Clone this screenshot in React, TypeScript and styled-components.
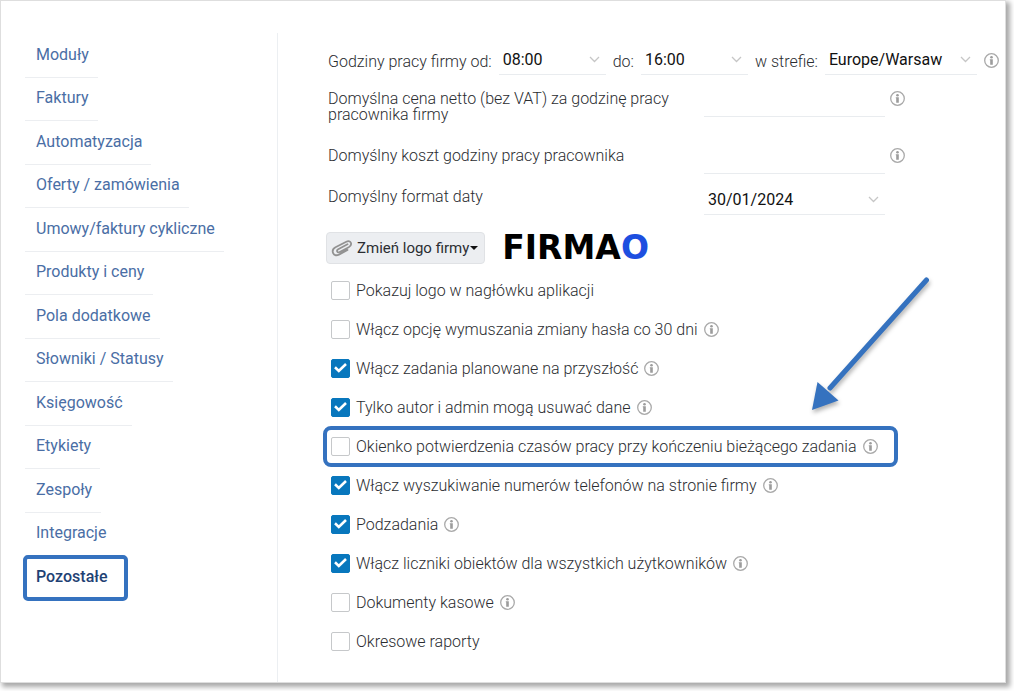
import React, { useId } from "react";
import styled, { createGlobalStyle, css } from "styled-components";

const accent = "#3572bf";

const GlobalStyle = createGlobalStyle`
  * { box-sizing: border-box; }
  body {
    margin: 0;
    background: #fff;
    color: #2b2d31;
    font-family: Roboto, "Liberation Sans", sans-serif;
    font-size: 16px;
    line-height: 16px;
  }
  input, select, button { font: inherit; color: inherit; }
`;

const Page = styled.div`
  display: flex;
  min-height: 100vh;
  padding: 0 8px 8px 0;
`;

const Card = styled.div`
  display: flex;
  flex: 1;
  padding-top: 32px;
  border: 1px solid #dedede;
  background: #fff;
  box-shadow: 3px 3px 5px 1px #a8a8a8;
`;

const Sidebar = styled.nav`
  flex: 0 0 277px;
  border-right: 1px solid #eceff2;
`;

const NavList = styled.ul`
  display: flex;
  flex-direction: column;
  align-items: flex-start;
  margin: 0;
  padding: 1px 0 0 24px;
  list-style: none;
`;

const NavItem = styled.li<{ $active?: boolean }>`
  position: relative;
  padding: 11px 9px 12px 11px;
  border-bottom: 1px solid #eceef1;
  line-height: 20px;

  &:nth-child(even) { padding-top: 10px; }

  ${(p) =>
    p.$active &&
    css`
      border-color: transparent;
      &::after {
        content: "";
        position: absolute;
        inset: -1px -12px -2px -2px;
        border: 4px solid ${accent};
        border-radius: 5px;
      }
    `}
`;

const NavLink = styled.a<{ $active?: boolean }>`
  color: ${(p) => (p.$active ? "#1f4274" : "#4a6ea5")};
  font-weight: ${(p) => (p.$active ? 500 : 400)};
  text-decoration: none;
`;

const Main = styled.main`
  flex: 1;
  min-width: 0;
  padding: 12px 4px 20px 50px;
`;

const HoursRow = styled.div`
  display: flex;
  align-items: center;
  gap: 7px;
  margin-bottom: 12px;
  white-space: nowrap;
`;

const HoursLabel = styled.label`
  padding-top: 3px;
  font-weight: 300;
`;

const SelectBox = styled.span<{ $width: number }>`
  display: grid;
  align-items: center;
  width: ${(p) => p.$width}px;
  height: 30px;
  border-bottom: 1px solid #e9ecef;

  > * { grid-area: 1 / 1; }
  > svg { justify-self: end; margin-right: 6px; pointer-events: none; }
`;

const Select = styled.select`
  appearance: none;
  width: 100%;
  height: 29px;
  padding: 0 4px;
  border: 0;
  background: transparent;
  color: #111;
`;

const Fields = styled.div`
  display: grid;
  row-gap: 11px;
`;

const FieldRow = styled.div`
  display: grid;
  grid-template-columns: 371px 181px 15px;
  column-gap: 5px;
  align-items: start;

  > svg { margin-top: 4px; }
`;

const FieldLabel = styled.label`
  max-width: 364px;
  padding: 4px 0 10px;
  font-weight: 300;
`;

const TextInput = styled.input`
  width: 100%;
  height: 30px;
  padding: 0 4px;
  border: 0;
  border-bottom: 1px solid #e9ecef;
  background: transparent;
`;

const LogoRow = styled.div`
  display: flex;
  align-items: center;
  gap: 17px;
  margin: 17px 0 7px -2px;
`;

const LogoButton = styled.button`
  display: flex;
  align-items: center;
  gap: 4px;
  height: 32px;
  padding: 0 6px 0 4px;
  border: 1px solid #e0e2e5;
  border-radius: 4px;
  background: #eceef1;
  color: #2b2d31;
  font-size: 15px;
`;

const Caret = styled.span`
  margin-left: -3px;
  border: 4px solid transparent;
  border-top: 4px solid #111;
  border-bottom: 0;
`;

const Logo = styled.div`
  color: #000;
  font-family: "DejaVu Sans", sans-serif;
  font-size: 33px;
  font-weight: 700;
  line-height: 28px;
`;

const LogoRing = styled.span`
  color: #1d4fe0;
`;

const Options = styled.ul`
  margin: 0;
  padding: 0;
  list-style: none;
`;

const Option = styled.li<{ $marked?: boolean }>`
  position: relative;
  display: flex;
  align-items: center;
  gap: 6px;
  width: fit-content;
  height: 39px;
  padding-left: 3px;

  ${(p) =>
    p.$marked &&
    css`
      &::after {
        content: "";
        position: absolute;
        inset: -1px -20px -1px -5px;
        border: 4px solid ${accent};
        border-radius: 8px;
        pointer-events: none;
      }
    `}
`;

const OptionLabel = styled.label`
  display: flex;
  align-items: center;
  gap: 6px;
  font-weight: 300;
  white-space: nowrap;
`;

const Tick = styled.span`
  display: grid;
  place-items: center;

  > * { grid-area: 1 / 1; }
  > svg { pointer-events: none; }
`;

const TickInput = styled.input`
  appearance: none;
  width: 19px;
  height: 19px;
  margin: 0;
  border: 1px solid #c6c8ca;
  border-radius: 2px;
  background: #fff;

  &:checked { border-color: #0877bd; background: #0877bd; }
  & + svg { visibility: hidden; }
  &:checked + svg { visibility: visible; }
`;

const Arrow = styled.svg`
  position: absolute;
  right: -54px;
  bottom: 56px;
  filter: drop-shadow(1px 3px 2px rgba(0, 0, 0, 0.3));
  overflow: visible;
  pointer-events: none;
`;

const InfoIcon = () => (
  <svg width="15" height="15" viewBox="0 0 15 15" fill="none" aria-hidden="true">
    <circle cx="7.5" cy="7.5" r="6.8" stroke="#a9a9a9" strokeWidth="1.3" />
    <circle cx="7.5" cy="4.2" r="1.3" fill="#9c9c9c" />
    <path d="M5.8 6.2h3v5.5H6.2V7.2h-.4z" fill="#9c9c9c" />
  </svg>
);

const Chevron = () => (
  <svg width="11" height="7" viewBox="0 0 11 7" fill="none" aria-hidden="true">
    <path d="M1 1l4.5 4.5L10 1" stroke="#c6c6c6" strokeWidth="1.3" />
  </svg>
);

const ClipIcon = () => (
  <svg width="22" height="20" viewBox="0 0 22 20" fill="none" aria-hidden="true">
    <path
      d="M16.5 6.3L7.2 11.2c-2.2 1.3-.9 4 1.5 2.8l9-4.7c4.3-2.4 2.3-7.9-2.4-5.6L4.5 9.300c-5.200 2.900-2.300 10.200 3.400 7.300l8.600-4.700"
      stroke="#929292"
      strokeWidth="1.8"
      strokeLinecap="round"
      strokeLinejoin="round"
    />
  </svg>
);

const Check = () => (
  <svg width="13" height="11" viewBox="0 0 13 11" fill="none" aria-hidden="true">
    <path d="M1 4.3l3.8 3.6L12 1" stroke="#fff" strokeWidth="2.6" />
  </svg>
);

type SelectFieldProps = { id: string; value: string; width: number };

const SelectField = ({ id, value, width }: SelectFieldProps) => (
  <SelectBox $width={width}>
    <Select id={id} defaultValue={value}>
      <option>{value}</option>
    </Select>
    <Chevron />
  </SelectBox>
);

type OptionData = { text: string; checked?: boolean; info?: boolean; marked?: boolean };

const OptionItem = ({ text, checked, info, marked }: OptionData) => {
  const id = useId();
  return (
    <Option $marked={marked}>
      <OptionLabel htmlFor={id}>
        <Tick>
          <TickInput id={id} type="checkbox" defaultChecked={checked} />
          <Check />
        </Tick>
        {text}
      </OptionLabel>
      {info && <InfoIcon />}
      {marked && (
        <Arrow width="120" height="136" viewBox="0 0 120 136" aria-hidden="true">
          <path d="M114.5 6L18 114" stroke={accent} strokeWidth="5" strokeLinecap="round" />
          <path d="M0 136L5.5 108L26.5 126.5Z" fill={accent} />
        </Arrow>
      )}
    </Option>
  );
};

const navItems = [
  "Moduły",
  "Faktury",
  "Automatyzacja",
  "Oferty / zamówienia",
  "Umowy/faktury cykliczne",
  "Produkty i ceny",
  "Pola dodatkowe",
  "Słowniki / Statusy",
  "Księgowość",
  "Etykiety",
  "Zespoły",
  "Integracje",
  "Pozostałe",
];

const options: OptionData[] = [
  { text: "Pokazuj logo w nagłówku aplikacji" },
  { text: "Włącz opcję wymuszania zmiany hasła co 30 dni", info: true },
  { text: "Włącz zadania planowane na przyszłość", checked: true, info: true },
  { text: "Tylko autor i admin mogą usuwać dane", checked: true, info: true },
  {
    text: "Okienko potwierdzenia czasów pracy przy kończeniu bieżącego zadania",
    info: true,
    marked: true,
  },
  { text: "Włącz wyszukiwanie numerów telefonów na stronie firmy", checked: true, info: true },
  { text: "Podzadania", checked: true, info: true },
  { text: "Włącz liczniki obiektów dla wszystkich użytkowników", checked: true, info: true },
  { text: "Dokumenty kasowe", info: true },
  { text: "Okresowe raporty" },
];

export default function App() {
  return (
    <Page>
      <GlobalStyle />
      <Card>
        <Sidebar>
          <NavList>
            {navItems.map((item) => {
              const active = item === "Pozostałe";
              return (
                <NavItem key={item} $active={active}>
                  <NavLink href="#" $active={active}>{item}</NavLink>
                </NavItem>
              );
            })}
          </NavList>
        </Sidebar>
        <Main>
          <HoursRow>
            <HoursLabel htmlFor="from">Godziny pracy firmy od:</HoursLabel>
            <SelectField id="from" value="08:00" width={107} />
            <HoursLabel htmlFor="to">do:</HoursLabel>
            <SelectField id="to" value="16:00" width={107} />
            <HoursLabel htmlFor="zone">w strefie:</HoursLabel>
            <SelectField id="zone" value="Europe/Warsaw" width={152} />
            <InfoIcon />
          </HoursRow>
          <Fields>
            <FieldRow>
              <FieldLabel htmlFor="price">
                Domyślna cena netto (bez VAT) za godzinę pracy pracownika firmy
              </FieldLabel>
              <TextInput id="price" type="text" />
              <InfoIcon />
            </FieldRow>
            <FieldRow>
              <FieldLabel htmlFor="cost">Domyślny koszt godziny pracy pracownika</FieldLabel>
              <TextInput id="cost" type="text" />
              <InfoIcon />
            </FieldRow>
            <FieldRow>
              <FieldLabel htmlFor="date">Domyślny format daty</FieldLabel>
              <SelectField id="date" value="30/01/2024" width={181} />
            </FieldRow>
          </Fields>
          <LogoRow>
            <LogoButton type="button">
              <ClipIcon />
              Zmień logo firmy
              <Caret />
            </LogoButton>
            <Logo>
              FIRMA<LogoRing>O</LogoRing>
            </Logo>
          </LogoRow>
          <Options>
            {options.map((o) => (
              <OptionItem key={o.text} {...o} />
            ))}
          </Options>
        </Main>
      </Card>
    </Page>
  );
}
